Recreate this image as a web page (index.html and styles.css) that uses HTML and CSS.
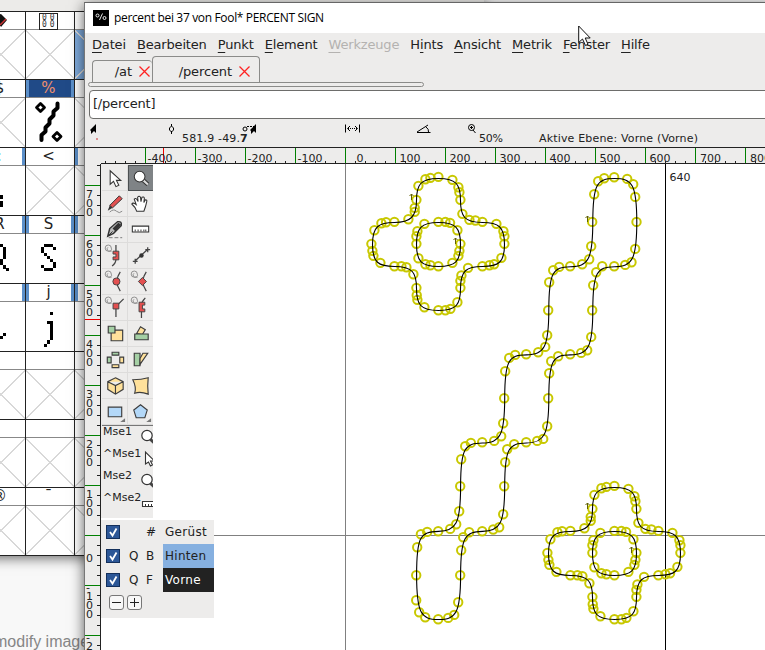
FILE: index.html
```html
<!DOCTYPE html>
<html lang="de">
<head>
<meta charset="utf-8">
<title>percent bei 37 von Fool* PERCENT SIGN</title>
<link rel="stylesheet" href="styles.css">
</head>
<body>
<div class="desktop">
  <p class="page-note">modify image</p>

  <section class="fontview">
    <div class="fontgrid">
      <div class="slot"><div class="head"><svg width="49" height="17"><path d="M17 3 24 2 30 8 24 15Z" fill="#111"/><path d="M23 13 29 7" stroke="#c33" stroke-width="1.5"/></svg></div><div class="body empty"></div></div>
      <div class="slot"><div class="head"><span class="hexbox"><i>00</i><i>00</i></span></div><div class="body empty"></div></div>
      <div class="slot"><div class="head"></div><div class="body empty picked"></div></div>

      <div class="slot"><div class="head">$</div><div class="body empty"></div></div>
      <div class="slot"><div class="head bars chosen">%</div><div class="body">
        <svg width="48" height="49" fill="none" stroke="#000" stroke-linejoin="round"><path stroke-width="2.800" d="M14.500 5.500l4 4-4 4-4-4zM31 34.500l4 4-4 4-4-4z"/><path stroke-width="4" stroke-linecap="round" d="M31.500 5.500v4.500l-4 3.500v4l-4 4v4l-4 4v4l-4 3.500v5"/></svg></div></div>
      <div class="slot"><div class="head"></div><div class="body empty"></div></div>

      <div class="slot"><div class="head barright cyan">:</div><div class="body"><svg width="48" height="49"><path d="M21 29h5v4h-3v2h3v6h-5z"/></svg></div></div>
      <div class="slot"><div class="head">&lt;</div><div class="body empty"></div></div>
      <div class="slot"><div class="head bars"></div><div class="body empty"></div></div>

      <div class="slot"><div class="head bars">R</div><div class="body"><svg width="48" height="49" shape-rendering="crispEdges"><path d="M19 10h7v3h-7zM26 13h3v12h-3zM20 25h6v3h-6zM23 28h3v3h-3zM26 31h3v4h-3zM29 34h3v3h-3z"/></svg></div></div>
      <div class="slot"><div class="head bars">S</div><div class="body"><svg width="48" height="49" shape-rendering="crispEdges"><path d="M18 10h9v3h-9zM15 13h3v6h-3zM27 13h3v3h-3zM18 19h3v3h-3zM21 22h3v3h-3zM24 25h3v3h-3zM27 28h3v6h-3zM15 31h3v3h-3zM18 34h9v3h-9z"/></svg></div></div>
      <div class="slot"><div class="head bars"></div><div class="body"></div></div>

      <div class="slot"><div class="head bars"></div><div class="body"><svg width="48" height="49"><path d="M26 31h3v3h-3zM21 34h5v3h-5z"/></svg></div></div>
      <div class="slot"><div class="head bars">j</div><div class="body"><svg width="48" height="49" shape-rendering="crispEdges"><path d="M24 10h3v3h-3zM21 19h6v19h-3v-16h-3zM21 38h3v4h-3zM18 42h3v3h-3z"/></svg></div></div>
      <div class="slot"><div class="head bars"></div><div class="body"></div></div>

      <div class="slot"><div class="head"></div><div class="body empty"></div></div>
      <div class="slot"><div class="head"></div><div class="body empty"></div></div>
      <div class="slot"><div class="head"></div><div class="body empty"></div></div>

      <div class="slot"><div class="head"></div><div class="body empty"></div></div>
      <div class="slot"><div class="head"></div><div class="body empty"></div></div>
      <div class="slot"><div class="head"></div><div class="body empty"></div></div>

      <div class="slot"><div class="head">®</div><div class="body empty"></div></div>
      <div class="slot"><div class="head">¯</div><div class="body empty"></div></div>
      <div class="slot"><div class="head"></div><div class="body empty"></div></div>
    </div>
  </section>

  <main class="glyphwin">
    <header class="titlebar">
      <svg class="appicon" width="16" height="16"><rect width="16" height="16"/><g fill="none" stroke="#fff" stroke-width=".9"><circle cx="4.500" cy="5.500" r="1.500"/><path d="M9.500 3.500L6.500 10"/><circle cx="11.500" cy="8" r="1.500"/></g></svg>
      <span>percent bei 37 von Fool* PERCENT SIGN</span>
    </header>
    <nav class="menu">
      <span><u>D</u>atei</span><span><u>B</u>earbeiten</span><span><u>P</u>unkt</span><span><u>E</u>lement</span><span class="off"><u>W</u>erkzeuge</span><span>H<u>i</u>nts</span><span><u>A</u>nsicht</span><span><u>M</u>etrik</span><span><u>F</u>enster</span><span><u>H</u>ilfe</span>
    </nav>
    <div class="tabs">
      <div class="tab first"><span>/at</span><svg width="11" height="11"><path d="M.5.5l10 10M10.500.5l-10 10" stroke="#f22" stroke-width="1.300"/></svg></div>
      <div class="tab active"><span>/percent</span><svg width="11" height="11"><path d="M.5.5l10 10M10.500.5l-10 10" stroke="#f22" stroke-width="1.300"/></svg></div>
    </div>
    <div class="tabbase"></div>
    <div class="entry">[/percent]</div>
    <svg class="info" width="681" height="28" viewBox="84 119 681 28">
      <path d="M96 124v9l-2-2-3 3v-3l-1-1zM256 124v9l-2-2-3 3v-3l-1-1z"/>
      <path d="M97 138v2" stroke="#c33"/>
      <g fill="none" stroke="#000">
        <path d="M171.500 124v2m0 5v3M169.500 128l2-2 2 2v2l-2 2-2-2z"/>
        <circle cx="245" cy="129" r="2"/><path d="M247 126.500h7" stroke-dasharray="2 1"/>
        <path d="M345.500 124.500v8M359.500 124.500v8M350 126l-2.500 2.500 2.500 2.500M355 126l2.500 2.500-2.500 2.500"/><path d="M348 128.500h10" stroke-dasharray="1 1"/>
        <path d="M417 132.500h13.500M417 132l11-7M426 127q3 2 2.500 5"/>
        <circle cx="471.500" cy="127.500" r="3"/><path d="M470 127.500h3M471.500 126v3M473 130l2.500 3"/>
      </g>
      <g class="infotext"><text x="182" y="142" textLength="58">581.9 -49.</text><text x="240" y="142" font-weight="bold">7</text><text x="479" y="142" textLength="24">50%</text><text x="539" y="142" textLength="159">Aktive Ebene: Vorne (Vorne)</text></g>
    </svg>
    <svg class="topruler" width="681" height="17" viewBox="84 147 681 17">
      <defs>
        <pattern id="tx" x="85" y="147" width="10" height="17" patternUnits="userSpaceOnUse"><path d="M.5 14v3" stroke="#222"/></pattern>
        <pattern id="gx" x="95" y="147" width="50" height="17" patternUnits="userSpaceOnUse"><path d="M.5 1v15" stroke="#008000"/></pattern>
      </defs>
      <rect x="101" y="147" width="664" height="17" fill="url(#tx)"/>
      <rect x="140" y="147" width="625" height="17" fill="url(#gx)"/>
      <path d="M163.500 148v15" stroke="#e00"/>
      <path d="M84 147.500h681M101 163.500h664" stroke="#222"/>
      <g class="rulertext"><text x="147.500" y="162">-400</text><text x="197.500" y="162">-300</text><text x="247.500" y="162">-200</text><text x="297.500" y="162">-100</text><text x="356.500" y="162">0</text><text x="399.500" y="162">100</text><text x="449.500" y="162">200</text><text x="499.500" y="162">300</text><text x="549.500" y="162">400</text><text x="599.500" y="162">500</text><text x="649.500" y="162">600</text><text x="700" y="162">700</text><text x="750" y="162">800</text></g>
    </svg>
    <div class="work">
      <svg class="sideruler" width="17" height="486" viewBox="84 164 17 486">
        <defs>
          <pattern id="ty" x="84" y="165" width="17" height="10" patternUnits="userSpaceOnUse"><path d="M13 .5h3" stroke="#222"/></pattern>
          <pattern id="gy" x="84" y="185" width="17" height="50" patternUnits="userSpaceOnUse"><path d="M1 .5h16" stroke="#008000"/></pattern>
        </defs>
        <rect x="84" y="164" width="17" height="486" fill="url(#ty)"/>
        <rect x="84" y="180" width="17" height="470" fill="url(#gy)"/>
        <path d="M85 319.500h16" stroke="#e00"/><path d="M100.500 164v486" stroke="#222"/>
        <g class="rulertext">
          <text><tspan x="86" y="198">7</tspan><tspan x="86" y="207">0</tspan><tspan x="86" y="216">0</tspan></text>
          <text><tspan x="86" y="248">6</tspan><tspan x="86" y="257">0</tspan><tspan x="86" y="266">0</tspan></text>
          <text><tspan x="86" y="298">5</tspan><tspan x="86" y="307">0</tspan><tspan x="86" y="316">0</tspan></text>
          <text><tspan x="86" y="348">4</tspan><tspan x="86" y="357">0</tspan><tspan x="86" y="366">0</tspan></text>
          <text><tspan x="86" y="398">3</tspan><tspan x="86" y="407">0</tspan><tspan x="86" y="416">0</tspan></text>
          <text><tspan x="86" y="448">2</tspan><tspan x="86" y="457">0</tspan><tspan x="86" y="466">0</tspan></text>
          <text><tspan x="86" y="498">1</tspan><tspan x="86" y="507">0</tspan><tspan x="86" y="516">0</tspan></text>
          <text x="86" y="562">0</text>
          <text><tspan x="86" y="591">-</tspan><tspan x="86" y="600">1</tspan><tspan x="86" y="609">0</tspan><tspan x="86" y="618">0</tspan></text>
          <text><tspan x="86" y="641">-</tspan><tspan x="86" y="650">2</tspan></text>
        </g>
      </svg>
      <div class="canvas">
        <svg class="outline" width="664" height="486" viewBox="101 164 664 486">
          <defs>
            <marker id="dot" markerUnits="userSpaceOnUse" markerWidth="12" markerHeight="12" refX="6" refY="6"><circle cx="6" cy="6" r="4.200" fill="none" stroke="#c8c800" stroke-width="2"/></marker>
            <marker id="dot3" markerUnits="userSpaceOnUse" markerWidth="36" markerHeight="36" refX="18" refY="18"><circle cx="18" cy="18" r="12.600" fill="none" stroke="#c8c800" stroke-width="6"/></marker>
            <g id="cross">
              <g transform="translate(350.400 160.200) scale(.33333)">
                <polyline class="dots" points="264,50 240,53 225,57 204,77 198,119 193,143 193,155 174,177 132,185 107,186 93,189 72,210 63,251 66,272 69,287 90,308 132,318 153,318 168,321 189,342 198,383 199,405 201,419 222,441 264,450 285,450 300,446 321,426 330,383 330,362 333,346 353,323 396,318 417,315 431,312 453,293 462,251 462,228 459,213 438,191 396,185 375,181 357,179 336,161 330,119 327,96 324,81 306,59" marker-start="url(#dot3)" marker-mid="url(#dot3)" marker-end="url(#dot3)"/>
                <polyline class="dots" points="264,185 285,185 299,188 321,210 330,251 327,272 324,287 306,308 264,318 240,315 225,312 204,294 198,251 198,228 201,213 222,191" marker-start="url(#dot3)" marker-mid="url(#dot3)" marker-end="url(#dot3)"/>
              </g>
              <g transform="translate(438.500 244.500)" fill="none" stroke="#000" stroke-width="1.100">
                <path d="M0-66C18-66 22-60 22-44C22-28 26-22 44-22C60-22 66-18 66 0C66 18 60 22 44 22C28 22 22 26 22 44C22 60 18 66 0 66C-18 66-22 60-22 44C-22 28-26 22-44 22C-60 22-66 18-66 0C-66-18-60-22-44-22C-28-22-22-28-22-44C-22-60-18-66 0-66Z"/>
                <path d="M0-22C17-22 22-17 22 0C22 17 17 22 0 22C-17 22-22 17-22 0C-22-17-17-22 0-22Z"/>
              </g>
              <path class="dir" d="M411.500 200v-6m-2 2l2-2 2 2M455.500 244v-6m-2 2l2-2 2 2"/>
            </g>
          </defs>
          <path d="M101 535.500h664M345.500 164v486" stroke="#808080"/>
          <path d="M665.500 164v486" stroke="#000"/>
          <use href="#cross"/>
          <use href="#cross" x="176" y="309"/>
          <polyline class="dots" transform="translate(.2 .2)" marker-start="url(#dot)" marker-mid="url(#dot)" marker-end="url(#dot)" points="614,177 627,178.700 633,184 635,196.700 636.300,221.700 635,248.700 631.300,262 625,264.700 614,266 602,266 596,272 593,285 592,310 591,336.700 587,350 581,352.700 570,354 558,356 551,361 549,373 548,398 547,426 543,438.700 537,440.700 526,442 514,444 507,449 505,462 504,486 503,514 499,527 493,529.300 482,531 469,532 463,537 461,550 460,575 458,602 454,614.700 448,617.700 438,619 425,617 419,612 416,600 416,575 417,547 420.700,534 427,531.700 438,531 450,528.700 456,524 459,511 460,486 461,459 465,446 470.700,442.700 482,442 494,440.700 501,436 503,423 504,398 505,371 509,357.700 515,354.700 526,354 538,352 545,346.700 547,335 548,310 549,282 553,270 559,266.700 570,266 582,264 589,259 591,246 592,221.700 594,194 598,181 604,178"/>
          <path fill="none" stroke="#000" stroke-width="1.100" d="M614.500 178.500C632 178.500 636.800 184 636.800 222C636.800 260 632 266.500 614.500 266.700C597 267 592.800 272 592.800 310C592.800 348 588 354.500 570.500 354.900C553 355 548.800 360 548.800 398C548.800 436 544 442.600 526.500 443C509 443.200 504.700 448 504.700 486C504.700 524 500 531 482.500 531.400C465 531.600 460.600 537 460.600 575C460.600 613 456 619.500 438.500 619.500C421 619.500 416.600 613 416.600 575C416.600 537 420 531.600 438.500 531.400C456 531 460.600 524 460.600 486C460.600 448 465 443.200 482.500 443C500 442.600 504.700 436 504.700 398C504.700 360 509 355 526.500 354.900C544 354.500 548.800 348 548.800 310C548.800 272 553 267 570.500 266.700C588 266.500 592.800 260 592.800 222C592.800 184 597 178.500 614.500 178.500Z"/>
          <path class="dir" d="M587.500 222v-6m-2 2l2-2 2 2"/>
          <text class="rulertext" x="669.500" y="181" textLength="21">640</text>
        </svg>

        <aside class="palette">
          <div class="tools">
            <svg viewBox="0 0 26 26"><path class="w" d="M8.500 6v14l3.500-3 2.500 5.500 3-1.500-2.500-5h4.500z"/></svg>
            <svg class="on" viewBox="0 0 26 26"><path d="M15 15l5.500 5" stroke="#333" stroke-width="4.500"/><path d="M15 15l5.500 5" stroke="#ddd" stroke-width="2.300"/><circle class="w" cx="11.500" cy="11.500" r="5.800"/></svg>
            <svg viewBox="0 0 26 26"><path d="M8 15L18 5l3 3-10 9.500z" fill="#e35050" stroke="#333"/><path d="M8 15l-2 5.500 5-3z" fill="#333"/><path d="M8 22q4-4 7-1t6 0" stroke="#888" fill="none"/></svg>
            <svg viewBox="0 0 26 26"><path class="w" d="M9 21q-1-4-5-7.500 1-2 4.500.5L6.500 8.500q1.500-1.500 3 .5l1 2-.5-4.500q1.500-2 3 0l.5 4.500 1-4.500q2-1 2.500 1L16.500 12l1.500-3q2 0 1.500 2-1 5-3 10z"/></svg>
            <svg viewBox="0 0 26 26"><path d="M6 20L8 12 16 5q5-1 4 4L12 17z" fill="#bbb" stroke="#333" stroke-width="1.500"/><path d="M11 12l6-6 3 2-6 7z" fill="#333"/><path d="M6 20l5-5" stroke="#333"/><path d="M7 21.500h14" stroke="#777" stroke-dasharray="4 2"/></svg>
            <svg viewBox="0 0 26 26"><path class="w" d="M4.500 9.500h17v6h-17z"/><path d="M7.500 13v2m3-2v2m3-2v2m3-2v2m2-2v2" stroke="#333"/></svg>
            <svg viewBox="0 0 26 26"><use href="#curl"/><path class="s" d="M14.500 2v7m0 8q0 4-4 7"/><path class="r" d="M11.500 8.500h6v9h-6v-3h3v-3h-3z"/></svg>
            <svg viewBox="0 0 26 26"><path class="s" d="M7 19L20 7M5 19h5m-2.500-2.500v5M18 7h5m-2.500-2.500v5"/><circle cx="14" cy="13" r="2.300" fill="#333"/></svg>
            <svg viewBox="0 0 26 26"><use href="#curl"/><path class="s" d="M19 3q-7 10 0 20"/><circle class="r" cx="15" cy="13" r="3.700"/></svg>
            <svg viewBox="0 0 26 26"><use href="#curl"/><path class="s" d="M19 3q-7 10 0 20"/><path class="r" d="M15 8.800l4.200 4.200-4.200 4.200-4.200-4.200z"/></svg>
            <svg viewBox="0 0 26 26"><use href="#curl"/><path class="s" d="M14.500 23V12l8-8"/><path class="r" d="M11.500 8.500h6v6h-6z"/></svg>
            <svg viewBox="0 0 26 26"><use href="#curl"/><path class="s" d="M18 3q-4 4-4 8m0 3v10"/><path class="r" d="M11.500 7.500h6v3h-2.500v4h2.500v3h-6z"/></svg>
            <svg viewBox="0 0 26 26"><path class="y" d="M9.500 9.500h12v11h-12z"/><path class="g" d="M6.500 5.500h7v7h-7z"/></svg>
            <svg viewBox="0 0 26 26"><path class="y" d="M9 13l4-7 5 3-3 5z"/><path class="g" d="M7 13.500h14v6H7z"/></svg>
            <svg viewBox="0 0 26 26"><path class="g" d="M10.500 5.500h7v3h-7zM5.500 10.500h4v6h-4z"/><path class="y" d="M18.500 10.500h4v6h-4zM10.500 18.500h7v3h-7z"/></svg>
            <svg viewBox="0 0 26 26"><path class="g" d="M6.500 6.500h6v13h-6z"/><path class="y" d="M12.500 18v-6l3-5.500h5z"/></svg>
            <svg viewBox="0 0 26 26"><path class="y" d="M14 5l8 4v8l-8 5-8-5V9zM6 9l8 4 8-4M14 13v9"/></svg>
            <svg viewBox="0 0 26 26"><path class="y" d="M5 7q9 0 16-2-1 9 0 17-8-3-14-1 2-6-2-14z"/></svg>
            <svg viewBox="0 0 26 26"><path class="b" d="M6.500 8.500h14v10h-14z"/><path d="M24 20v4h-5z" fill="#777"/></svg>
            <svg viewBox="0 0 26 26"><path class="b" d="M13 6l7 5.500-2.500 8h-9L6 11.500z"/><path d="M24 20v4h-5z" fill="#777"/></svg>
          </div>
          <div class="mice">
            <div>Mse1<svg width="13" height="17"><use href="#lens"/></svg></div>
            <div class="shift">^Mse1<svg width="10" height="17"><path class="w" d="M1.500 2v12l3-2 2 4 2-1-2-4h4z"/></svg></div>
            <div>Mse2<svg width="13" height="17"><use href="#lens"/></svg></div>
            <div class="shift">^Mse2<svg width="13" height="17"><path class="w" d="M1.500 7.500h14v5h-14z"/><path d="M4.500 10v2m3-2v2m3-2v2" stroke="#333"/></svg></div>
          </div>
        </aside>

        <aside class="layers">
          <div class="layer"><i class="check"><svg width="12" height="12"><use href="#tick"/></svg></i><span></span><span>#</span><b>Gerüst</b></div>
          <div class="layer"><i class="check"><svg width="12" height="12"><use href="#tick"/></svg></i><span>Q</span><span>B</span><b class="back">Hinten</b></div>
          <div class="layer"><i class="check"><svg width="12" height="12"><use href="#tick"/></svg></i><span>Q</span><span>F</span><b class="front">Vorne</b></div>
          <div class="addrow"><button><svg width="9" height="9"><path d="M0 4.500h9" stroke="#222"/></svg></button><button><svg width="9" height="9"><path d="M0 4.500h9M4.500 0v9" stroke="#222"/></svg></button></div>
        </aside>
      </div>
    </div>
  </main>

  <svg class="pointer" width="14" height="22"><path d="M.7 1v16.500l3.800-3.500 3 6.500 2.500-1.200-2.800-6.300h5z" fill="#fff" stroke="#111"/></svg>
</div>
<svg class="symbols" width="0" height="0">
  <defs>
    <path id="curl" d="M10 8.500H6.500A3.200 3.200 0 1 1 9.700 5.300A2.300 2.300 0 1 1 6.200 4.500" fill="none" stroke="#8c8c8c" stroke-width="1"/>
    <g id="lens"><path d="M9 11l5 4.500" stroke="#444" stroke-width="3"/><circle cx="6" cy="7.500" r="5.200" fill="#fff" stroke="#333" stroke-width="1.200"/></g>
    <path id="tick" d="M3 6l2.500 3.500L9.500 2.500" fill="none" stroke="#fff" stroke-width="1.800"/>
  </defs>
</svg>
</body>
</html>
```
FILE: styles.css
```css
* { box-sizing: border-box; }
body { margin: 0; font-family: "DejaVu Sans", sans-serif; color: #222; }
svg { display: block; }

.desktop { position: relative; width: 765px; height: 650px; overflow: hidden; background: #f8f8f8; }
.page-note { position: absolute; left: -6px; top: 632px; margin: 0; font: 16px/20px "Liberation Sans", sans-serif; color: #868686; white-space: nowrap; }

/* font overview behind the glyph window */
.fontview { position: absolute; left: -23px; top: 0; width: 507px; height: 556px; padding-top: 11px; background: #ecebe9; box-shadow: 0 2px 12px rgba(0,0,0,.6); }
.fontgrid { display: grid; grid-template-columns: repeat(3, 49px); grid-auto-rows: 68px; width: 147px; height: 545px; background: #fff; border-bottom: 1px solid #222; }
.slot { border-top: 1px solid #222; border-right: 1px solid #222; }
.head { height: 18px; border-bottom: 1px solid #888; font: 15px/17px "DejaVu Sans", sans-serif; text-align: center; display: flex; justify-content: center; padding-right: 3px; }
.bars { box-shadow: inset 3px 0 #5b8fc9, inset -3px 0 #5b8fc9; }
.barright { box-shadow: inset -3px 0 #5b8fc9; }
.chosen { background: #204a87; color: #f0906c; }
.cyan { color: #7fd8f0; }
.body { height: 49px; }
.empty {
  background:
    linear-gradient(45deg, transparent 49.1%, #d8d8d8 49.1%, #d8d8d8 50.9%, transparent 50.9%),
    linear-gradient(-45deg, transparent 49.1%, #d8d8d8 49.1%, #d8d8d8 50.9%, transparent 50.9%);
}
.picked { background-color: #7fabdd; }
.hexbox { width: 19px; height: 17px; margin-top: 1px; border: 1px solid #222; font: 8px/7px "DejaVu Sans Mono", monospace; letter-spacing: 3px; padding-left: 2px; color: #333; }
.hexbox i { display: block; font-style: normal; }

/* glyph window */
.glyphwin { position: absolute; left: 84px; top: 2px; width: 690px; height: 660px; background: #edeceb; border-top: 1px solid #666; border-left: 1px solid #777; box-shadow: 0 3px 13px rgba(0,0,0,.65); display: flex; flex-direction: column; }
.titlebar { height: 30px; background: #fff; display: flex; align-items: center; gap: 5px; padding: 0 0 1px 8px; font: 12px "Open Sans", sans-serif; color: #000; }
.titlebar span { letter-spacing: -.34px; }
.menu { height: 25px; display: flex; gap: 11.1px; padding: 3px 0 0 7px; font-size: 13px; line-height: 17px; letter-spacing: -.17px; white-space: nowrap; }
.menu u { text-underline-offset: 3px; text-decoration-thickness: 1px; }
.off { color: #b4b2b0; }
.tabs { height: 26px; margin-top: -2px; display: flex; align-items: flex-end; padding-left: 7px; }
.tab { height: 22px; border: 1px solid #8b8b89; border-bottom: 0; border-radius: 4px 4px 0 0; display: flex; align-items: center; justify-content: flex-end; gap: 7px; font-size: 13px; letter-spacing: -.1px; }
.first { width: 60px; border-right: 0; padding-right: 2px; }
.active { width: 108px; height: 26px; padding: 4px 9px 0 0; }
.tabbase { width: 336px; height: 5px; margin-left: 3px; border: 1px solid #8b8b89; border-radius: 3px; flex: none; }
.entry { height: 29px; margin: 3px 0 0 4px; background: #fff; border: 1px solid #6d6d6b; border-radius: 4px; padding-left: 3px; font-size: 13px; line-height: 26px; letter-spacing: -.2px; flex: none; }
.info, .topruler { margin-left: -1px; flex: none; }
.infotext { font-size: 11px; fill: #222; }
.rulertext { font-size: 11px; fill: #222; }
.work { display: flex; margin-left: -1px; }
.canvas { position: relative; width: 664px; height: 486px; background: #fff; }
.dots { fill: none; stroke: none; }
.dir { fill: none; stroke: #606000; stroke-width: 1; }

/* floating palettes */
.palette { position: absolute; left: 0; top: 0; width: 52px; height: 354px; background: #edeceb; overflow: hidden; }
.tools { display: grid; grid-template-columns: 26px 26px; padding: 1px 0 0 1px; width: 53px; }
.tools svg { width: 26px; height: 26px; border-right: 1px solid #dddcdb; border-bottom: 1px solid #dddcdb; }
.tools .on { background: #7f8386; border: 1px solid #4c5052; }
.mice { border-top: 1px solid #777; margin: 0 0 0 1px; width: 52px; }
.mice div { height: 22px; display: flex; font-size: 11px; line-height: 11px; padding-left: 1px; justify-content: space-between; white-space: nowrap; }
.mice svg { flex: none; margin-top: 2px; }
.w { fill: #fff; stroke: #333; stroke-width: 1.1; }
.s { fill: none; stroke: #444; stroke-width: 1.3; }
.r { fill: #e35050; stroke: #444; }
.y { fill: #ffe19b; stroke: #3d3d3d; stroke-width: 1.2; }
.g { fill: #a5d0a5; stroke: #3d3d3d; stroke-width: 1.2; }
.b { fill: #b3d8f8; stroke: #3d3d3d; stroke-width: 1.2; }

.layers { position: absolute; left: 0; top: 356px; width: 113px; height: 98px; background: #edeceb; font-size: 12px; }
.layer { height: 24px; display: grid; grid-template-columns: 28px 17px 17px 51px; align-items: center; }
.check { width: 14px; height: 14px; margin-left: 5px; background: #2c5797; border: 1px solid #14305c; }
.layer b { font-weight: normal; line-height: 24px; padding-left: 2px; letter-spacing: .3px; }
.back { background: #86b0e0; }
.front { background: #222; color: #fff; }
.addrow { display: flex; gap: 3px; padding: 3px 0 0 8px; }
.addrow button { width: 15px; height: 15px; padding: 0; border: 1px solid #777; border-radius: 3px; background: #f8f8f8; display: grid; place-items: center; }

.pointer { position: absolute; left: 578px; top: 25px; }
.symbols { position: absolute; }
```
